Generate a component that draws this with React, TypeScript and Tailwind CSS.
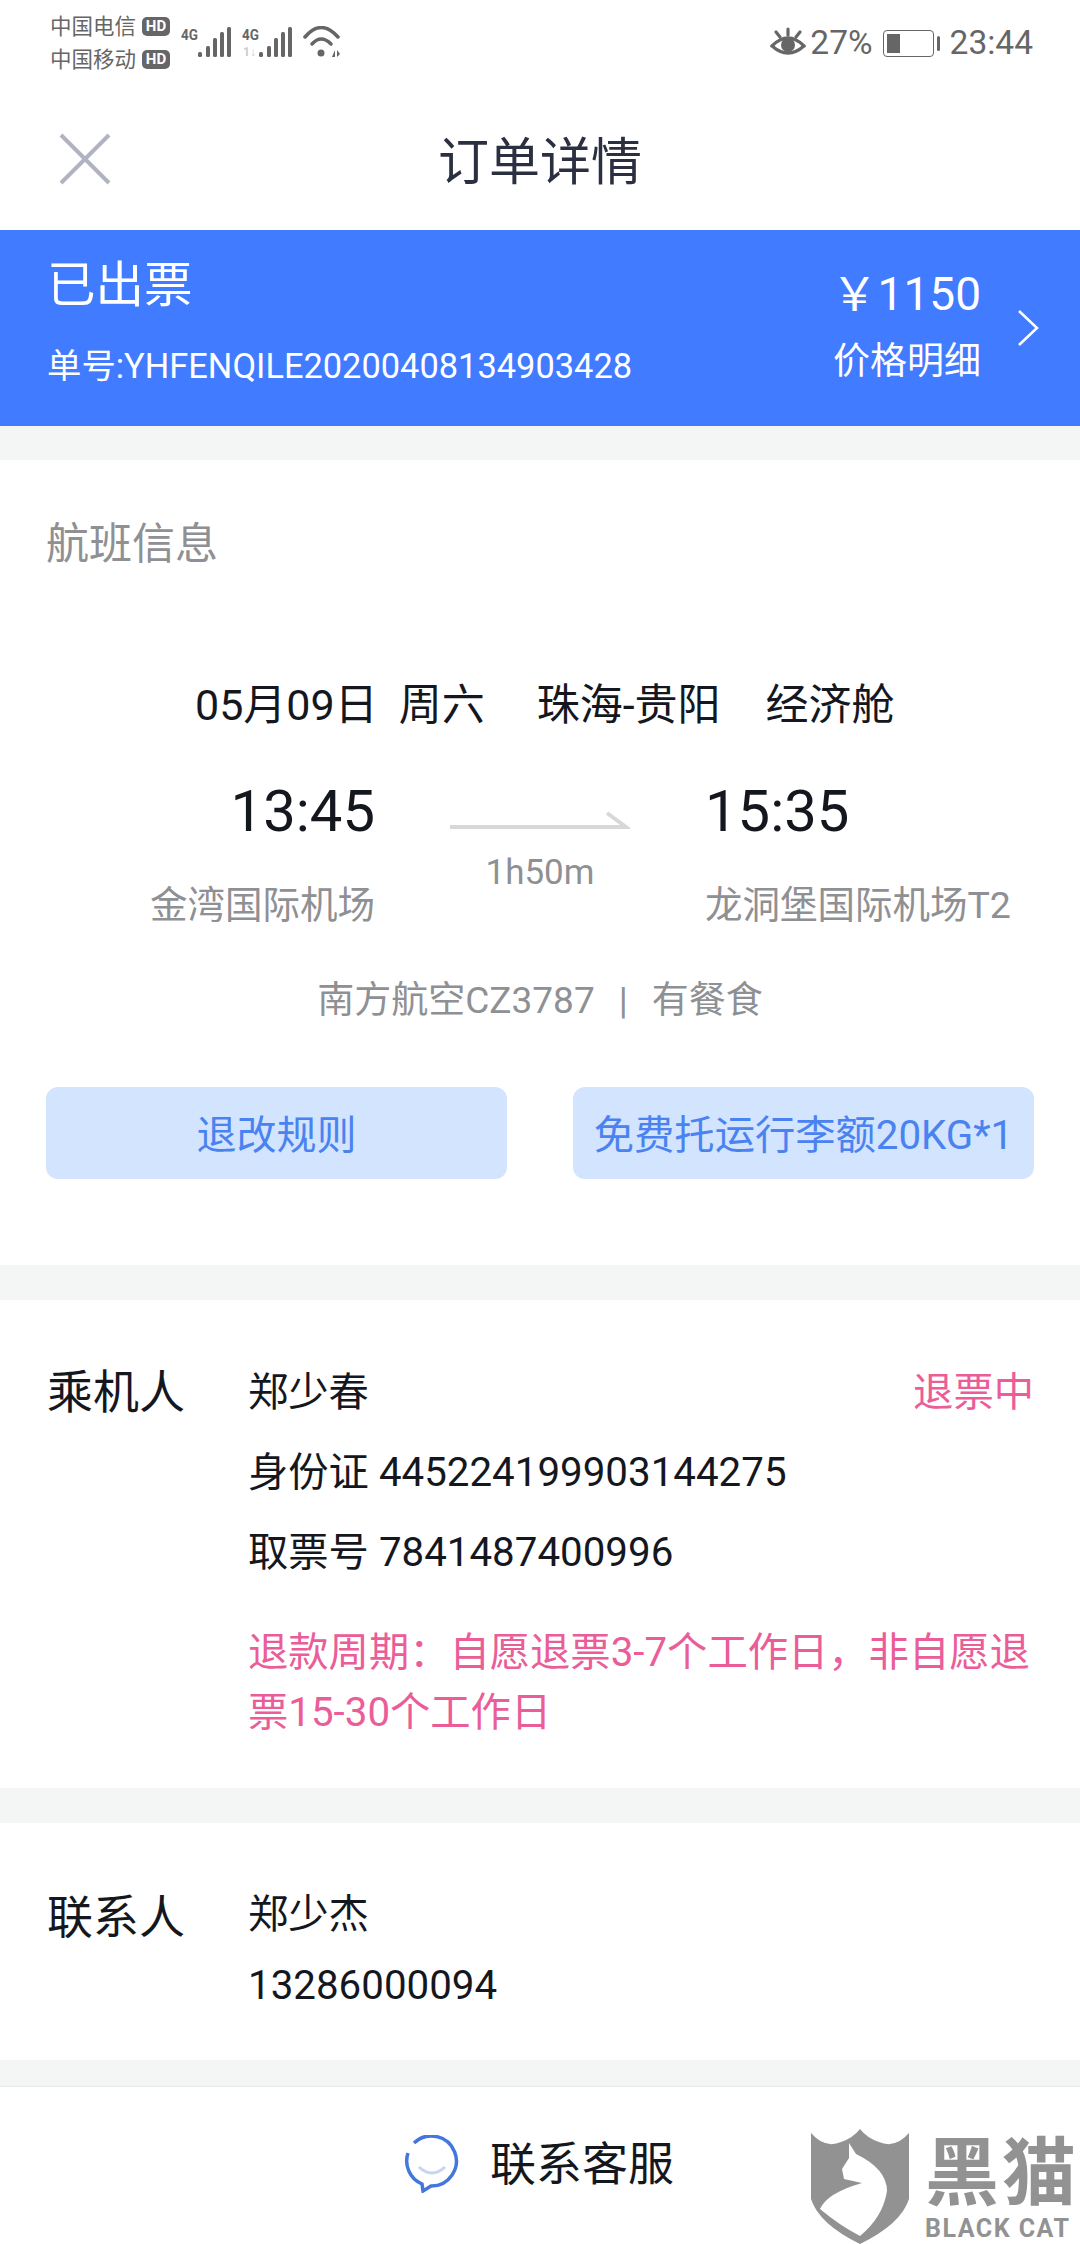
const font = { fontFamily: '"Roboto", "Noto Sans CJK SC", sans-serif' };

function SignalBars({ dim }: { dim?: boolean }) {
  const bars = [
    { x: 0, h: 5 },
    { x: 8, h: 11 },
    { x: 15, h: 19 },
    { x: 22, h: 25 },
    { x: 29, h: 30 },
  ];
  return (
    <svg width="61" height="32" viewBox="0 0 61 32" className="shrink-0">
      <text x="0" y="14" fontSize="15" fontWeight="700" fill="#666" fontFamily="Roboto" textLength="17" lengthAdjust="spacingAndGlyphs">
        4G
      </text>
      {dim && (
        <text x="1" y="30" fontSize="12" fontWeight="700" fill="#ccc" fontFamily="Roboto">
          1↓
        </text>
      )}
      {bars.map((b) => (
        <rect key={b.x} x={b.x + 17} y={31 - b.h} width="4" height={b.h} rx="1.5" fill="#666" />
      ))}
    </svg>
  );
}

function HdBadge() {
  return (
    <span className="bg-[#666] text-white rounded-[5px] w-[28px] h-[19px] flex items-center justify-center text-[15px] leading-none font-bold">
      HD
    </span>
  );
}

function StatusBar() {
  return (
    <div className="h-[90px] flex justify-between pl-[50px] pr-[47px] pt-[10px] text-[#666666]">
      <div className="flex items-start">
        <div className="text-[21.5px] leading-[33px] w-[122px]">
          <div className="flex items-center gap-[6px]">
            中国电信
            <HdBadge />
          </div>
          <div className="flex items-center gap-[6px]">
            中国移动
            <HdBadge />
          </div>
        </div>
        <div className="flex items-start pt-[16px] ml-[9px]">
          <SignalBars />
          <SignalBars dim />
          <svg width="38" height="32" viewBox="0 0 38 32" fill="none" stroke="#666" strokeWidth="3.5" strokeLinecap="round">
            <path d="M2 11 Q18 -8 35 11" />
            <path d="M9 18 Q18 8 28 18" />
            <circle cx="18" cy="27" r="3.5" fill="#666" stroke="none" />
            <path d="M29 31 L32 24 V31 Z M34 24 L34 31 L37 28 Z" fill="#666" stroke="none" />
          </svg>
        </div>
      </div>
      <div className="flex items-center h-[44px] mt-[11px] text-[33.5px] leading-none">
        <svg width="36" height="32" viewBox="0 0 36 32" fill="none" stroke="#666" strokeWidth="3.2">
          <path d="M2 19 Q18 3 34 19 Q18 33 2 19 Z" />
          <circle cx="18" cy="18" r="7" fill="#666" stroke="none" />
          <path d="M18 2 V8 M6 5 L10 10 M30 5 L26 10" strokeLinecap="round" />
        </svg>
        <span className="ml-[4px]">27%</span>
        <div className="ml-[10px] w-[51px] h-[27px] rounded-[4px] border-[1.5px] border-[#666] p-[3px]">
          <div className="w-[13px] h-full bg-[#666]" />
        </div>
        <div className="ml-[3px] w-[3px] h-[15px] rounded-sm bg-[#666]" />
        <span className="ml-[10px]">23:44</span>
      </div>
    </div>
  );
}

function Header() {
  return (
    <div className="relative h-[140px] flex items-center justify-center pt-[4px]">
      <svg width="52" height="52" viewBox="0 0 52 52" className="absolute left-[59px] top-[43px]" stroke="#b0b4c0" strokeWidth="4">
        <path d="M2 2 L50 50 M50 2 L2 50" />
      </svg>
      <div className="text-[51px] text-[#2b3040] leading-none">订单详情</div>
    </div>
  );
}

function OrderBanner() {
  return (
    <div className="h-[196px] bg-[#417bff] text-white flex items-center justify-between pl-[47px] pr-[41px]">
      <div>
        <div className="text-[48.5px] leading-[56px] mb-[32px] -mt-[12px]">已出票</div>
        <div className="text-[34.4px] leading-[40px]">单号:YHFENQILE20200408134903428</div>
      </div>
      <div className="flex items-center">
        <div className="text-right">
          <div className="text-[46px] leading-[52px] mb-[20px] -mt-[4px]">￥1150</div>
          <div className="text-[37px] leading-[44px]">价格明细</div>
        </div>
        <svg width="22" height="38" viewBox="0 0 22 38" className="ml-[36px]" fill="none" stroke="#fff" strokeWidth="2.5">
          <path d="M2 2 L20 19 L2 36" />
        </svg>
      </div>
    </div>
  );
}

function FlightInfo() {
  return (
    <section className="h-[805px] bg-white px-[46px]">
      <div className="pt-[59px] text-[43px] leading-[50px] text-[#8f9094]">航班信息</div>
      <div className="mt-[111px] flex pl-[149px] text-[43px] leading-[50px] text-[#15171f] whitespace-nowrap">
        <span>05月09日</span>
        <span className="ml-[21px]">周六</span>
        <span className="ml-[52px]">珠海-贵阳</span>
        <span className="ml-[45px]">经济舱</span>
      </div>
      <div className="mt-[47px] grid grid-cols-[329px_330px_1fr] whitespace-nowrap">
        <div className="text-right">
          <div className="text-[58px] leading-[68px] text-[#15171f]">13:45</div>
          <div className="text-[37.5px] leading-[44px] text-[#8f9094] mt-[38px]">金湾国际机场</div>
        </div>
        <div className="flex flex-col items-center pt-[32px]">
          <svg width="180" height="24" viewBox="0 0 180 24" fill="none" stroke="#d8d8d8" strokeWidth="4">
            <path d="M0 18 H176 L157 4" />
          </svg>
          <div className="text-[35px] leading-[40px] text-[#8f9094] mt-[20px]">1h50m</div>
        </div>
        <div>
          <div className="text-[58px] leading-[68px] text-[#15171f]">15:35</div>
          <div className="text-[37.5px] leading-[44px] text-[#8f9094] mt-[38px]">龙洞堡国际机场T2</div>
        </div>
      </div>
      <div className="mt-[52px] text-center text-[37px] leading-[44px] text-[#8f9094]">
        南方航空CZ3787<span className="mx-[24px]">|</span>有餐食
      </div>
      <div className="mt-[64px] grid grid-cols-[461px_461px] justify-between">
        <div className="h-[92px] rounded-[12px] bg-[#d2e4fe] flex items-center justify-center pt-[6px] text-[40px] text-[#4a82f0]">退改规则</div>
        <div className="h-[92px] rounded-[12px] bg-[#d2e4fe] flex items-center justify-center pt-[6px] text-[40.3px] text-[#4a82f0] whitespace-nowrap">免费托运行李额20KG*1</div>
      </div>
    </section>
  );
}

function Passenger() {
  return (
    <section className="h-[488px] bg-white pl-[47px] pr-[46px] pt-[59px] flex">
      <div className="w-[201px] shrink-0 text-[46px] leading-[56px] text-[#15171f] mt-[5px]">乘机人</div>
      <div className="flex-1 text-[40.3px] text-[#15171f]">
        <div className="flex justify-between h-[56px] items-center mt-[6px]">
          <span>郑少春</span>
          <span className="text-[#ea5d98]">退票中</span>
        </div>
        <div className="mt-[24px] h-[56px] flex items-center">身份证 445224199903144275</div>
        <div className="mt-[24px] h-[56px] flex items-center">取票号 7841487400996</div>
        <div className="mt-[42px] leading-[60px] text-[#ea5d98]">
          退款周期：自愿退票3-7个工作日，非自愿退票15-30个工作日
        </div>
      </div>
    </section>
  );
}

function Contact() {
  return (
    <section className="h-[237px] bg-white pl-[47px] pt-[60px] flex">
      <div className="w-[201px] shrink-0 text-[46px] leading-[56px] text-[#15171f] mt-[6px]">联系人</div>
      <div className="text-[40.3px] text-[#15171f] mt-[4px]">
        <div className="leading-[56px]">郑少杰</div>
        <div className="leading-[56px] mt-[15px]">13286000094</div>
      </div>
    </section>
  );
}

function Footer() {
  return (
    <div className="relative flex-1 bg-white border-t border-[#e8eaea] flex items-center justify-center pb-[4px] pr-[2px]">
      <svg width="56" height="58" viewBox="0 0 56 58" fill="none" className="mr-[30px]">
        <path d="M10 8 A25 25 0 1 1 27 51 L19 56 L18 49 A25 25 0 0 1 4 18" stroke="#4477dd" strokeWidth="3.5" />
        <path d="M15 32 Q28 44 41 32" stroke="#c5d4f3" strokeWidth="3" />
      </svg>
      <div className="text-[46px] leading-none text-[#15171f]">联系客服</div>
    </div>
  );
}

function Watermark() {
  return (
    <div className="absolute right-0 bottom-0 w-[269px] h-[115px] flex">
      <svg width="98" height="115" viewBox="0 0 98 115" className="shrink-0">
        <path d="M0 4 Q14 20 30 13 Q42 9 49 0 Q56 9 68 13 Q84 20 98 4 V70 Q90 95 49 115 Q8 95 0 70 Z" fill="#929292" />
        <path d="M38 14 L45 25 Q76 40 76 62 Q72 88 49 107 Q28 96 9 80 Q16 64 51 54 L33 50 L31 40 L38 29 Z" fill="#fff" />
      </svg>
      <div className="ml-[16px] w-[155px] text-[#929292] overflow-hidden">
        <div className="text-[74px] leading-[78px] font-bold whitespace-nowrap tracking-[3px] mt-[6px]">黑猫</div>
        <div className="text-[25px] leading-[26px] font-bold whitespace-nowrap tracking-[1.5px] mt-[3px]">BLACK CAT</div>
      </div>
    </div>
  );
}

export default function App() {
  return (
    <div style={font} className="relative w-[1080px] h-[2244px] overflow-hidden flex flex-col bg-[#f4f6f6]">
      <div className="bg-white">
        <StatusBar />
        <Header />
      </div>
      <OrderBanner />
      <div className="h-[34px] shrink-0" />
      <FlightInfo />
      <div className="h-[35px] shrink-0" />
      <Passenger />
      <div className="h-[35px] shrink-0" />
      <Contact />
      <div className="h-[26px] shrink-0" />
      <Footer />
      <Watermark />
    </div>
  );
}
